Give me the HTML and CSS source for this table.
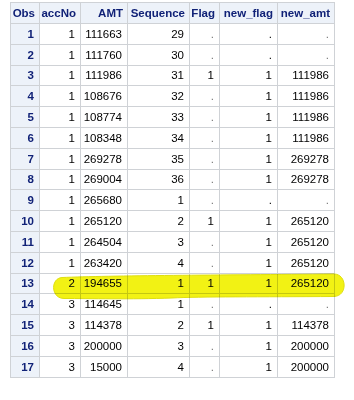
FILE: index.html
```html
<!DOCTYPE html>
<html>
<head>
<meta charset="utf-8">
<link rel="stylesheet" href="styles.css">
</head>
<body>
<div class="wrap">
<table class="data">
  <colgroup>
    <col class="c-obs"><col class="c-acc"><col class="c-amt"><col class="c-seq"><col class="c-flag"><col class="c-nf"><col class="c-na">
  </colgroup>
  <thead>
    <tr><th>Obs</th><th>accNo</th><th>AMT</th><th>Sequence</th><th>Flag</th><th>new_flag</th><th>new_amt</th></tr>
  </thead>
  <tbody>
    <tr><th>1</th><td>1</td><td>111663</td><td>29</td><td class="dot">.</td><td>.</td><td class="dot">.</td></tr>
    <tr><th>2</th><td>1</td><td>111760</td><td>30</td><td class="dot">.</td><td>.</td><td class="dot">.</td></tr>
    <tr><th>3</th><td>1</td><td>111986</td><td>31</td><td>1</td><td>1</td><td>111986</td></tr>
    <tr><th>4</th><td>1</td><td>108676</td><td>32</td><td class="dot">.</td><td>1</td><td>111986</td></tr>
    <tr><th>5</th><td>1</td><td>108774</td><td>33</td><td class="dot">.</td><td>1</td><td>111986</td></tr>
    <tr><th>6</th><td>1</td><td>108348</td><td>34</td><td class="dot">.</td><td>1</td><td>111986</td></tr>
    <tr><th>7</th><td>1</td><td>269278</td><td>35</td><td class="dot">.</td><td>1</td><td>269278</td></tr>
    <tr><th>8</th><td>1</td><td>269004</td><td>36</td><td class="dot">.</td><td>1</td><td>269278</td></tr>
    <tr><th>9</th><td>1</td><td>265680</td><td>1</td><td class="dot">.</td><td>.</td><td class="dot">.</td></tr>
    <tr><th>10</th><td>1</td><td>265120</td><td>2</td><td>1</td><td>1</td><td>265120</td></tr>
    <tr><th>11</th><td>1</td><td>264504</td><td>3</td><td class="dot">.</td><td>1</td><td>265120</td></tr>
    <tr><th>12</th><td>1</td><td>263420</td><td>4</td><td class="dot">.</td><td>1</td><td>265120</td></tr>
    <tr><th>13</th><td>2</td><td>194655</td><td>1</td><td>1</td><td>1</td><td>265120</td></tr>
    <tr><th>14</th><td>3</td><td>114645</td><td>1</td><td class="dot">.</td><td>.</td><td class="dot">.</td></tr>
    <tr><th>15</th><td>3</td><td>114378</td><td>2</td><td>1</td><td>1</td><td>114378</td></tr>
    <tr><th>16</th><td>3</td><td>200000</td><td>3</td><td class="dot">.</td><td>1</td><td>200000</td></tr>
    <tr><th>17</th><td>3</td><td>15000</td><td>4</td><td class="dot">.</td><td>1</td><td>200000</td></tr>
  </tbody>
</table>
<svg class="marker" width="354" height="400" viewBox="0 0 354 400" xmlns="http://www.w3.org/2000/svg">
  <path d="M 62 275.5 C 110 273.5, 220 273, 334 272 C 347 272, 348 294, 334 294.5 C 260 295, 200 294.5, 172 296 C 130 297.5, 90 296.5, 64 296.5 C 51 296.5, 50 276.5, 62 275.5 Z" fill="#f2f214" stroke="#dede10" stroke-width="1"/>
</svg>
</div>
</body>
</html>
```
FILE: styles.css
```css
html, body {
  margin: 0;
  padding: 0;
  background: #ffffff;
}

.wrap {
  position: relative;
  width: 354px;
  height: 400px;
}

.data {
  margin: 2px 0 0 10px;
  border-collapse: collapse;
  table-layout: fixed;
  width: 324px;
  font-family: "Liberation Sans", Arial, sans-serif;
  font-size: 11.5px;
  color: #000000;
  border: 1px solid #c8c8c8;
}

.c-obs { width: 29px; }
.c-acc { width: 41px; }
.c-amt { width: 47px; }
.c-seq { width: 62px; }
.c-flag { width: 30px; }
.c-nf { width: 58px; }
.c-na { width: 57px; }

.data th,
.data td {
  border: 1px solid #cfd2d6;
  padding: 0 5px 0 0;
  text-align: right;
  white-space: nowrap;
  height: 19.8px;
  line-height: 14px;
  overflow: hidden;
}

.data thead th {
  background: #edf2f9;
  color: #112277;
  font-weight: bold;
  height: 20px;
  padding: 0 4px 0 0;
}

.data tbody th {
  background: #edf2f9;
  color: #112277;
  font-weight: bold;
}

.data td.dot {
  color: #777777;
}

.marker {
  position: absolute;
  left: 0;
  top: 0;
  pointer-events: none;
  mix-blend-mode: multiply;
}
```
